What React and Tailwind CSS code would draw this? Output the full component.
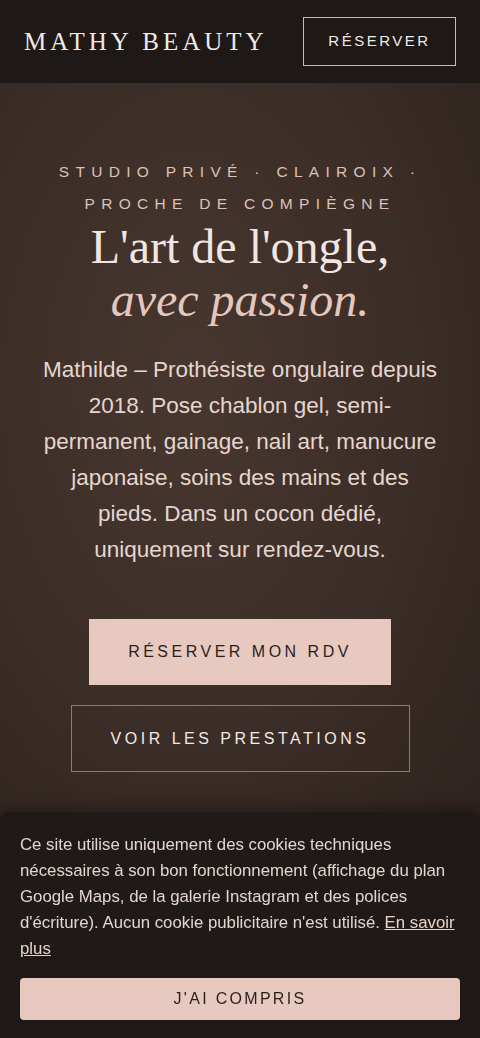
export default function App() {
  const sans = { fontFamily: '"Liberation Sans", Arial, sans-serif' };
  const serif = { fontFamily: '"Liberation Serif", "Times New Roman", serif' };

  return (
    <div className="min-h-screen bg-[#2c221e]" style={sans}>
      {/* Header */}
      <header className="h-[83px] bg-[#1e1917] flex items-center justify-between pl-6 pr-6">
        <div className="text-[25px] tracking-[4px] text-[#f2e9e4]" style={serif}>
          MATHY BEAUTY
        </div>
        <button className="w-[153px] h-[49px] border border-[#cdb9b1] text-[15px] tracking-[2.5px] text-[#f2e9e4]">
          RÉSERVER
        </button>
      </header>

      {/* Hero */}
      <section className="h-[760px] bg-[radial-gradient(ellipse_at_40%_40%,#47372f_0%,#3b2d27_55%,#2e231f_100%)] px-10 pt-[73px] text-center">
        <p className="text-[15.5px] leading-[32px] tracking-[6.3px] text-[#dcc2b8]">
          STUDIO PRIVÉ · CLAIROIX · PROCHE DE COMPIÈGNE
        </p>
        <h1 className="text-[48px] leading-[53px] text-[#f3e6e1]" style={serif}>
          L'art de l'ongle,
          <br />
          <em className="text-[#e5c7bd]">avec passion.</em>
        </h1>
        <p className="mt-[26px] text-[22.5px] leading-[36px] text-[#e6d6cf]">
          Mathilde – Prothésiste ongulaire depuis 2018. Pose chablon gel, semi-permanent, gainage, nail art, manucure japonaise, soins des mains et des pieds. Dans un cocon dédié, uniquement sur rendez-vous.
        </p>
        <div className="mt-[51px] flex flex-col items-center gap-5">
          <button className="w-[302px] h-[66px] bg-[#e8c9bf] text-[#2a1f1c] text-[16px] tracking-[3.5px]">
            RÉSERVER MON RDV
          </button>
          <button className="w-[339px] h-[67px] border border-[#8c7a73] text-[#f3e9e4] text-[16px] tracking-[3.5px]">
            VOIR LES PRESTATIONS
          </button>
        </div>
      </section>

      {/* Cookie banner */}
      <div className="fixed bottom-0 left-0 right-0 bg-[#1f1a18] rounded-t-lg shadow-[0_-4px_16px_rgba(0,0,0,0.35)] px-5 pt-5 pb-[18px]">
        <p className="text-[16.8px] leading-[26px] text-[#e3d4ce] -mr-2">
          Ce site utilise uniquement des cookies techniques nécessaires à son bon fonctionnement (affichage du plan Google Maps, de la galerie Instagram et des polices d'écriture). Aucun cookie publicitaire n'est utilisé.{" "}
          <a className="underline text-[#ead2ca]">En savoir plus</a>
        </p>
        <button className="mt-4 w-full h-[42px] rounded bg-[#e8c9bf] text-[#2a1f1c] text-[16px] tracking-[2.3px]">
          J'AI COMPRIS
        </button>
      </div>
    </div>
  );
}
